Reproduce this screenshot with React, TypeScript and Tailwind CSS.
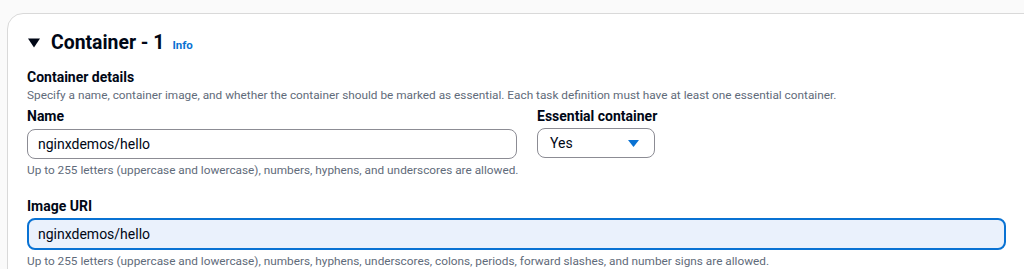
export default function App() {
  return (
    <div
      className="h-[269px] w-[1024px] overflow-hidden bg-[#fafafa] pl-[7px] pt-[13px]"
      style={{ fontFamily: 'Roboto, "Noto Sans", sans-serif' }}
    >
      <div className="h-[300px] w-[1060px] rounded-tl-2xl border border-[#d9d9d9] bg-white pl-[19px] pt-[19px]">
        {/* Header */}
        <div className="flex h-[20px] items-center">
          <svg width="12" height="10" viewBox="0 0 12 10" className="ml-[1px]">
            <path d="M0 0.5 H12 L6 9.5 Z" fill="#000716" />
          </svg>
          <h2 className="ml-[11px] text-[19.4px] font-bold leading-[20px] text-[#000716]">Container - 1</h2>
          <a href="#" className="ml-[8px] mt-[3px] text-[11.5px] font-bold leading-[14px] text-[#0972d3]">
            Info
          </a>
        </div>

        {/* Container details */}
        <div className="mt-[16px]">
          <div className="text-[14px] font-bold leading-[16px] text-[#000716]">Container details</div>
          <div className="mt-[3px] whitespace-nowrap text-[11.8px] leading-[15px] text-[#5f6b7a]">
            Specify a name, container image, and whether the container should be marked as essential. Each task
            definition must have at least one essential container.
          </div>
        </div>

        <div className="mt-[3px] flex gap-[20px]">
          <div className="w-[490px]">
            <div className="text-[14px] font-bold leading-[20px] text-[#000716]">Name</div>
            <div className="mt-[3px] flex h-[30px] items-center rounded-lg border border-[#8c8c94] px-[10px] text-[14px] text-[#000716]">
              nginxdemos/hello
            </div>
            <div className="mt-[3.5px] whitespace-nowrap text-[11.8px] leading-[15px] text-[#5f6b7a]">
              Up to 255 letters (uppercase and lowercase), numbers, hyphens, and underscores are allowed.
            </div>
          </div>
          <div className="w-[118px]">
            <div className="whitespace-nowrap text-[14px] font-bold leading-[20px] text-[#000716]">
              Essential container
            </div>
            <div className="mt-[2px] flex h-[30px] items-center justify-between rounded-lg border border-[#8c8c94] pl-[12px] pr-[15px] text-[14px] text-[#000716]">
              <span>Yes</span>
              <svg width="11" height="7" viewBox="0 0 11 7">
                <path d="M0 0 H11 L5.5 7 Z" fill="#0972d3" />
              </svg>
            </div>
          </div>
        </div>

        <div className="mt-[18.5px] w-[979px]">
          <div className="text-[14px] font-bold leading-[20px] text-[#000716]">Image URI</div>
          <div className="mt-[2px] flex h-[32px] items-center rounded-lg border-2 border-[#0972d3] bg-[#eaf1fc] px-[9px] text-[14px] text-[#000716]">
            nginxdemos/hello
          </div>
          <div className="mt-[3.5px] whitespace-nowrap text-[11.8px] leading-[15px] text-[#5f6b7a]">
            Up to 255 letters (uppercase and lowercase), numbers, hyphens, underscores, colons, periods, forward
            slashes, and number signs are allowed.
          </div>
        </div>
      </div>
    </div>
  );
}
